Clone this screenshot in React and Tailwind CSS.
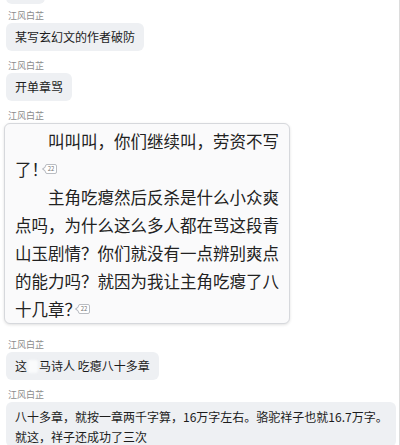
import React from "react";

const font = { fontFamily: '"Noto Sans CJK SC", "Noto Sans", sans-serif' };

function Label() {
  return (
    <div className="pl-[2px] text-[9px] leading-[12px] text-[#8c8c8c]">江风白芷</div>
  );
}

function Badge() {
  return (
    <span className="relative ml-[-3px] inline-flex h-[10px] w-[12px] items-center justify-center rounded-[2px] border border-[#b9bcc2] bg-white indent-0 align-middle text-[6px] leading-none text-[#777]">
      <span className="absolute left-[-3px] top-[2px] h-[4px] w-[4px] rotate-45 border-b border-l border-[#b9bcc2] bg-white" />
      <span className="relative">22</span>
    </span>
  );
}

export default function App() {
  return (
    <div
      className="h-[445px] w-[400px] overflow-hidden border-r border-[#dcdcdc] bg-white pl-[6px] text-[#1c1c1c]"
      style={font}
    >
      <div className="mt-[-26px] h-[30px] w-[39px] rounded-[6px] bg-[#eef0f3]" />

      <div className="mt-[6px]">
        <Label />
      </div>
      <div className="mt-[1px] inline-block h-[28px] rounded-[6px] bg-[#eef0f3] px-[9px] text-[12px] leading-[28px]">
        某写玄幻文的作者破防
      </div>

      <div className="mt-[9px]">
        <Label />
      </div>
      <div className="mt-[1px] inline-block h-[28px] rounded-[6px] bg-[#eef0f3] px-[9px] text-[12px] leading-[28px]">
        开单章骂
      </div>

      <div className="mt-[9px]">
        <Label />
      </div>
      <div className="ml-[-2px] mt-[1px] w-[286px] rounded-[6px] border border-[#d6d8dc] bg-[#fafafb] pb-0 pl-[10px] pr-[10px] pt-[3px] text-[16.5px] leading-[28px] whitespace-nowrap text-[#222] shadow-[0_1px_3px_rgba(0,0,0,0.12)]">
        <div className="pl-[33px]">叫叫叫，你们继续叫，劳资不写</div>
        <div className="flex items-center">
          <span>了！</span>
          <Badge />
        </div>
        <div className="pl-[33px]">主角吃瘪然后反杀是什么小众爽</div>
        <div>点吗，为什么这么多人都在骂这段青</div>
        <div>山玉剧情？你们就没有一点辨别爽点</div>
        <div>的能力吗？就因为我让主角吃瘪了八</div>
        <div className="flex items-center">
          <span>十几章？</span>
          <Badge />
        </div>
      </div>

      <div className="mt-[15px]">
        <Label />
      </div>
      <div className="mt-[1px] inline-flex h-[28px] items-center rounded-[6px] bg-[#eef0f3] px-[9px] text-[12px] leading-[28px]">
        <span>这</span>
        <span className="mx-[1px] inline-block h-[13px] w-[10px] rounded-[2px] bg-[#fafbfc] blur-[1px]" />
        <span>马诗人 吃瘪八十多章</span>
      </div>

      <div className="mt-[9px]">
        <Label />
      </div>
      <div className="mt-[1px] w-[390px] rounded-[6px] bg-[#eef0f3] pl-[9px] pt-[5px] text-[12px] leading-[20px] whitespace-nowrap">
        八十多章，就按一章两千字算，16万字左右。骆驼祥子也就16.7万字。
        <br />
        就这，祥子还成功了三次
      </div>
    </div>
  );
}
